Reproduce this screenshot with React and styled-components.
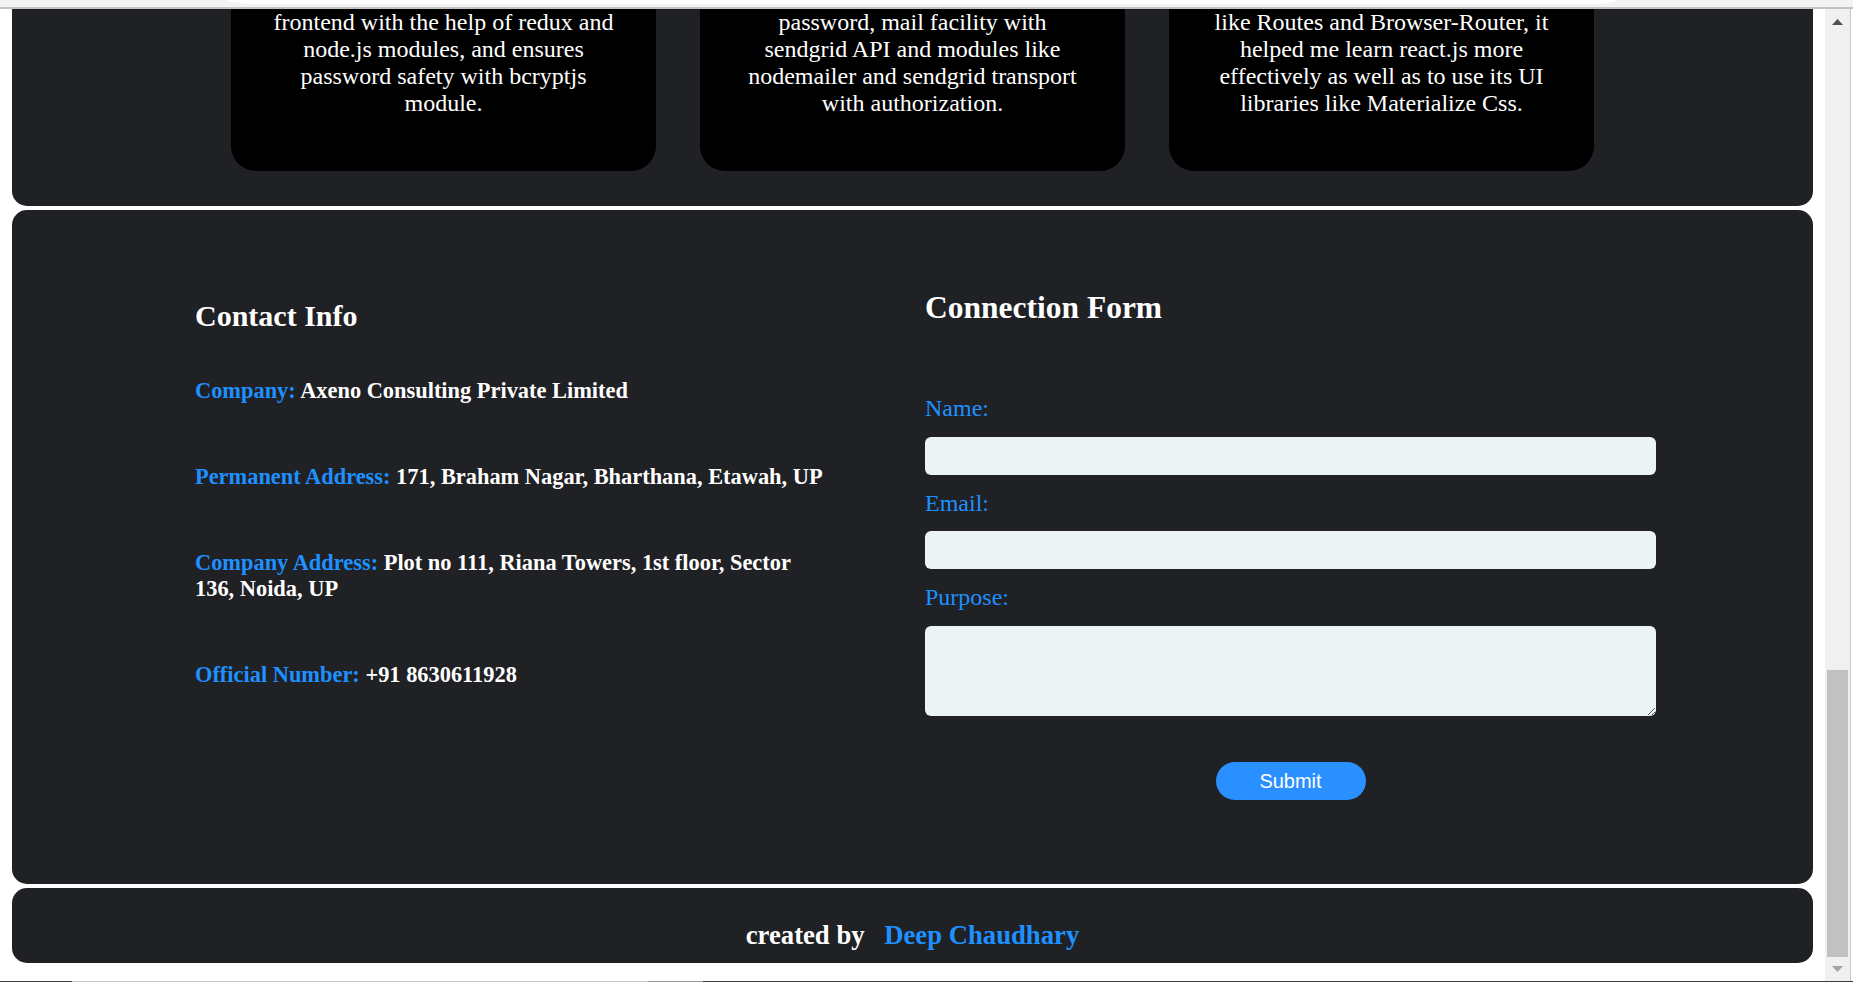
import React from "react";
import styled, { createGlobalStyle } from "styled-components";

const Global = createGlobalStyle`
  html, body {
    margin: 0;
    padding: 0;
    height: 100%;
    overflow: hidden;
    background: #ffffff;
  }
  body {
    font-family: "Liberation Serif", "Times New Roman", serif;
  }
  #root {
    height: 100%;
  }
`;

const SERIF = `"Liberation Serif", "Times New Roman", serif`;
const SANS = `"Liberation Sans", Arial, sans-serif`;
const ACCENT = "#1e90ff";
const PANEL = "#1f2124";

/* ---------- browser frame ---------- */

const Screen = styled.div`
  height: 100vh;
  display: flex;
  flex-direction: column;
  background: #ffffff;
`;

const TopChrome = styled.div`
  flex: 0 0 9px;
  box-sizing: border-box;
  background: #f3f3f3;
  border-bottom: 2px solid #c3c3c3;
  padding-left: 228px;
`;

const AddressBar = styled.div`
  width: 1388px;
  height: 4px;
  background: #ffffff;
  border-radius: 0 0 30px 30px / 0 0 4px 4px;
`;

const Main = styled.div`
  flex: 1;
  min-height: 0;
  display: flex;
`;

const PageClip = styled.div`
  flex: 1;
  min-width: 0;
  overflow: hidden;
  display: flex;
  flex-direction: column;
  justify-content: flex-end;
`;

const Scrollbar = styled.div`
  flex: 0 0 25px;
  margin-right: 2px;
  border-right: 1px solid #c6c6c6;
  background: #f0f0f0;
  display: flex;
  flex-direction: column;
  padding-bottom: 4px;
`;

const ScrollButton = styled.div`
  height: ${(p) => p.$h}px;
  display: flex;
  align-items: center;
  justify-content: center;
`;

const Track = styled.div`
  flex: 1;
  display: flex;
  flex-direction: column;
  justify-content: flex-end;
  padding: 0 2px 3px;
`;

const Thumb = styled.div`
  height: 287px;
  background: #c1c1c1;
`;

const BottomEdge = styled.div`
  flex: 0 0 1px;
  background: linear-gradient(
    to right,
    #3c3c3c 0 72px,
    #c8c8c8 72px 648px,
    #9c9c9c 648px 703px,
    #3c3c3c 703px
  );
`;

/* ---------- page ---------- */

const Page = styled.div`
  flex-shrink: 0;
  display: flex;
  flex-direction: column;
  gap: 4px;
  padding: 0 12px 18px;
`;

const Panel = styled.section`
  background: ${PANEL};
  border-radius: 15px;
`;

const ProjectsPanel = styled(Panel)`
  padding: 40px 0 35px;
`;

const SectionTitle = styled.h2`
  margin: 0 0 40px;
  text-align: center;
  color: #ffffff;
  font-family: ${SERIF};
  font-size: 36px;
`;

const CardRow = styled.div`
  display: flex;
  justify-content: center;
  align-items: stretch;
  gap: 44px;
`;

const Card = styled.article`
  width: 425px;
  box-sizing: border-box;
  padding: 30px 37.5px 54.5px;
  background: #000000;
  border-radius: 25px;
  color: #ffffff;
  text-align: center;
  font-family: ${SERIF};
`;

const CardTitle = styled.h3`
  margin: 0 0 20px;
  font-size: 28px;
`;

const CardText = styled.p`
  margin: 0;
  font-size: 24px;
  line-height: normal;
`;

/* contact */

const ContactPanel = styled(Panel)`
  display: grid;
  grid-template-columns: 636px 731px;
  column-gap: 94px;
  align-items: start;
  padding: 80px 0 84px 183px;
  font-family: ${SERIF};
`;

const InfoColumn = styled.div`
  padding-top: 9px;
  color: #ffffff;
`;

const InfoHeading = styled.h2`
  margin: 0 0 45px;
  font-size: 30px;
  font-weight: 700;
  line-height: normal;
`;

const InfoList = styled.div`
  display: flex;
  flex-direction: column;
  gap: 60px;
`;

const InfoItem = styled.p`
  margin: 0;
  font-size: 22.4px;
  font-weight: 700;
  line-height: normal;
`;

const InfoKey = styled.span`
  color: ${ACCENT};
`;

const FormColumn = styled.form`
  display: flex;
  flex-direction: column;
`;

const FormHeading = styled.h2`
  margin: 0 0 69px;
  font-size: 31.5px;
  font-weight: 700;
  line-height: normal;
  color: #ffffff;
`;

const Fields = styled.div`
  display: flex;
  flex-direction: column;
  gap: 14.8px;
`;

const FieldLabel = styled.label`
  font-size: 24px;
  line-height: normal;
  color: ${ACCENT};
`;

const fieldBase = `
  box-sizing: border-box;
  width: 100%;
  border: none;
  border-radius: 6px;
  background: #ebf3f3;
  padding: 4px 10px;
  font-family: ${SANS};
  font-size: 16px;
  color: #222;
  outline: none;
`;

const TextInput = styled.input`
  ${fieldBase}
  height: 38px;
`;

const TextArea = styled.textarea`
  ${fieldBase}
  height: 90px;
  display: block;
  resize: both;
`;

const SubmitButton = styled.button`
  align-self: center;
  margin-top: 46px;
  width: 150px;
  height: 38px;
  border: none;
  border-radius: 19px;
  background: #2b90ff;
  color: #ffffff;
  font-family: ${SANS};
  font-size: 20px;
  cursor: pointer;
`;

/* footer */

const FooterPanel = styled(Panel)`
  height: 75px;
  box-sizing: border-box;
  padding-top: 32px;
  text-align: center;
  font-family: ${SERIF};
  font-size: 26.7px;
  font-weight: 700;
  line-height: normal;
  color: #ffffff;
`;

const Author = styled.span`
  color: ${ACCENT};
  margin-left: 13px;
`;

/* ---------- data ---------- */

const projects = [
  {
    title: "Authentication App",
    text:
      "It connects the node backend to the frontend with the help of redux and node.js modules, and ensures password safety with bcryptjs module.",
  },
  {
    title: "Mailing App",
    text:
      "It provides login, signup, reset password, mail facility with sendgrid API and modules like nodemailer and sendgrid transport with authorization.",
  },
  {
    title: "Portfolio App",
    text:
      "This uses react-router-dom features like Routes and Browser-Router, it helped me learn react.js more effectively as well as to use its UI libraries like Materialize Css.",
  },
];

const contactInfo = [
  { key: "Company:", value: "Axeno Consulting Private Limited" },
  { key: "Permanent Address:", value: "171, Braham Nagar, Bharthana, Etawah, UP" },
  {
    key: "Company Address:",
    value: "Plot no 111, Riana Towers, 1st floor, Sector 136, Noida, UP",
  },
  { key: "Official Number:", value: "+91 8630611928" },
];

const Triangle = ({ up, color }) => (
  <svg width="11" height="6" viewBox="0 0 11 6">
    <polygon points={up ? "0,6 5.5,0 11,6" : "0,0 5.5,6 11,0"} fill={color} />
  </svg>
);

export default function App() {
  return (
    <>
      <Global />
      <Screen>
        <TopChrome>
          <AddressBar />
        </TopChrome>
        <Main>
          <PageClip>
            <Page>
              <ProjectsPanel>
                <SectionTitle>Projects</SectionTitle>
                <CardRow>
                  {projects.map((p) => (
                    <Card key={p.title}>
                      <CardTitle>{p.title}</CardTitle>
                      <CardText>{p.text}</CardText>
                    </Card>
                  ))}
                </CardRow>
              </ProjectsPanel>

              <ContactPanel>
                <InfoColumn>
                  <InfoHeading>Contact Info</InfoHeading>
                  <InfoList>
                    {contactInfo.map((c) => (
                      <InfoItem key={c.key}>
                        <InfoKey>{c.key}</InfoKey> {c.value}
                      </InfoItem>
                    ))}
                  </InfoList>
                </InfoColumn>

                <FormColumn onSubmit={(e) => e.preventDefault()}>
                  <FormHeading>Connection Form</FormHeading>
                  <Fields>
                    <FieldLabel htmlFor="name">Name:</FieldLabel>
                    <TextInput id="name" type="text" />
                    <FieldLabel htmlFor="email">Email:</FieldLabel>
                    <TextInput id="email" type="email" />
                    <FieldLabel htmlFor="purpose">Purpose:</FieldLabel>
                    <TextArea id="purpose" />
                  </Fields>
                  <SubmitButton type="submit">Submit</SubmitButton>
                </FormColumn>
              </ContactPanel>

              <FooterPanel as="footer">
                created by <Author>Deep Chaudhary</Author>
              </FooterPanel>
            </Page>
          </PageClip>
          <Scrollbar>
            <ScrollButton $h={26}>
              <Triangle up color="#505050" />
            </ScrollButton>
            <Track>
              <Thumb />
            </Track>
            <ScrollButton $h={17}>
              <Triangle color="#a3a3a3" />
            </ScrollButton>
          </Scrollbar>
        </Main>
        <BottomEdge />
      </Screen>
    </>
  );
}
